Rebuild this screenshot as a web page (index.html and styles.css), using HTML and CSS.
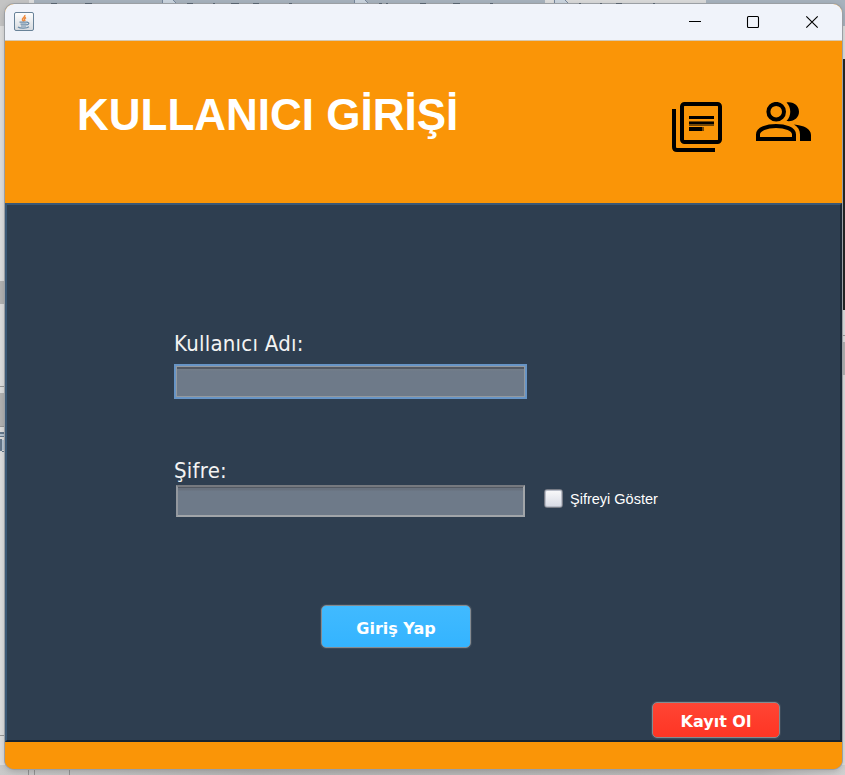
FILE: index.html
```html
<!DOCTYPE html>
<html lang="tr">
<head>
<meta charset="utf-8">
<title>Kullanıcı Girişi</title>
<link rel="stylesheet" href="styles.css">
</head>
<body>
<svg class="backdrop" width="845" height="775" viewBox="0 0 845 775" shape-rendering="crispEdges" aria-hidden="true">
  <defs><linearGradient id="floor"><stop offset="0" stop-color="#c9c9c9"/><stop offset=".3" stop-color="#b5b5b5"/><stop offset=".9" stop-color="#bababa"/><stop offset="1" stop-color="#d0d0d0"/></linearGradient></defs>
  <path fill="#dedede" d="M0 0h845v775H0z"/>
  <path fill="#c4c4c4" d="M0 0h29v26H0z"/>
  <path fill="#a7b2bd" d="M34 0h511v12H34zM706 0h139v26H706z"/>
  <path fill="#dadada" d="M553 0h153v12H553z"/>
  <g stroke="#77879c" fill="#cbd5df"><path d="M162.500-1v5h14l-4-5zM354.500-1v5h14l-4-5zM554.500-1v5h14l-4-5z"/></g>
  <path fill="#262626" d="M842 59h3v251h-3z"/>
  <path fill="#b2b2b2" d="M0 281h5v23H0zM0 393h5v33H0zM842 342h3v33h-3z"/>
  <path fill="#999" d="M0 386h5v1H0zM0 426h5v1H0zM842 335h3v1h-3zM0 735h5v1H0z"/>
  <path fill="#65788c" d="M0 432h5v2H0zM0 436h5v1H0zM0 439h2v12H0zM2 451h3v1H2z"/>
  <path fill="#b4c4d2" d="M0 434h5v2H0zM2 440h3v10H2z"/>
  <path fill="url(#floor)" d="M0 765h845v10H0z"/>
  <path fill="#929292" d="M28 769h1v6h-1zM34 769h1v6h-1zM69 769h1v6h-1z"/>
</svg>
<main class="window">
  <div class="titlebar">
    <svg class="java" width="20" height="20" viewBox="0 0 20 20">
      <defs><linearGradient id="tile" x2="0" y2="1"><stop stop-color="#fff"/><stop offset="1" stop-color="#d5d9de"/></linearGradient></defs>
      <rect x=".5" y=".5" width="19" height="18" rx="1.500" fill="url(#tile)" stroke="#688298"/>
      <path d="M10.800 3c1 2-3.300 3-2.300 5l1.300 1.500M12 5.500c-2 1.200-2 2-.8 3.500" fill="none" stroke="#ee8a3d" stroke-width="1.500"/>
      <path d="M5.500 10.200h8M6.500 12.200h6M7 14h5M13 10.500c3-.5 2 2.500-.7 2.300M4 15c2 1.700 9 1.500 11-.2" fill="none" stroke="#6c8ca8" stroke-width="1.200"/>
    </svg>
    <svg class="controls" width="132" height="20" viewBox="0 0 132 20" fill="none" stroke="#000">
      <path d="M1 9.500h12" shape-rendering="crispEdges"/>
      <rect x="59.500" y="4.500" width="11" height="11" rx="1" stroke-width="1.100"/>
      <path d="M118.300 4.300l11.400 11.400M129.700 4.300L118.300 15.700" stroke-width="1.150"/>
    </svg>
  </div>
  <header class="header">
    <h1>KULLANICI GİRİŞİ</h1>
    <svg class="docs" width="50" height="50" viewBox="0 0 50 50">
      <path d="M2 7v38q0 3 3 3h38" fill="none" stroke="#000" stroke-width="4"/>
      <rect x="10" y="2" width="38" height="38" rx="2.500" fill="none" stroke="#000" stroke-width="4"/>
      <path d="M17 14h25v3H17zM17 20h25v2H17zM17 25h13v4H17z"/>
      <path d="M17 19h25v1H17zM17 22h25v2H17zM30 25h2v4h-2z" fill="#704506"/>
    </svg>
    <svg class="people" width="56" height="40" viewBox="0 0 56 40">
      <circle cx="20.200" cy="9.700" r="7.800" fill="none" stroke="#000" stroke-width="4"/>
      <path d="M30.500.4C38 -.8 43 4 43 9.700S38 20 30.500 19c5-5 5-13.500 0-18.600z"/>
      <path d="M2 37V32.500C2 27 11 24 20 24s18 3 18 8.500V37z" fill="none" stroke="#000" stroke-width="4"/>
      <path d="M38 22.500c10 .8 17 4.500 17 10.500v6H44v-6.500c0-4.500-2-7.500-6-10z"/>
    </svg>
  </header>
  <section class="content">
    <label class="label name-label" for="user">Kullanıcı Adı:</label>
    <input class="field focused" id="user" type="text">
    <label class="label pass-label" for="pass"><span>Şifre:</span></label>
    <div class="pass-row">
      <input class="field" id="pass" type="password">
      <label class="show"><span class="box"></span><span class="show-text">Şifreyi Göster</span></label>
    </div>
    <button class="login"><span>Giriş Yap</span></button>
    <button class="register"><span>Kayıt Ol</span></button>
  </section>
  <footer class="footer"></footer>
</main>
<svg class="tabs" width="845" height="4" viewBox="0 0 845 4" shape-rendering="crispEdges" aria-hidden="true">
  <path fill="#59636e" d="M51 3h6v1h-6zM85 3h7v1h-7zM187 3h6v1h-6zM213 3h2v1h-2zM231 3h8v1h-8zM253 3h6v1h-6zM289 3h3v1h-3zM379 3h3v1h-3zM386 3h2v1h-2zM420 3h6v1h-6zM453 3h7v1h-7zM490 3h3v1h-3zM579 3h2v1h-2zM600 3h2v1h-2zM616 3h6v1h-6zM653 3h2v1h-2z"/>
</svg>
</body>
</html>
```
FILE: styles.css
```css
* { box-sizing: border-box; }
body { margin: 0; width: 845px; height: 775px; overflow: hidden; padding: 4px 3px 6px 5px; background: #dedede; }
.backdrop { position: absolute; left: 0; top: 0; z-index: -1; }
.tabs { position: absolute; left: 0; top: 0; }
.window { width: 837px; height: 765px; border-radius: 9px; overflow: hidden; box-shadow: 0 0 0 1px #9b9fa4, 0 2px 7px #0003; background: #fa9507; }
.titlebar { height: 37px; display: flex; justify-content: space-between; padding: 8px 22px 0 9px; background: #f0f3fa; border-bottom: 1px solid #d7c8ad; }
.header { height: 162px; display: flex; align-items: flex-start; background: #fa9507; padding-left: 72px; }
h1 { margin: 47px 0 0; width: 595px; font: bold 44px/54px "Liberation Sans", sans-serif; color: #fff; white-space: nowrap; }
.docs { margin-top: 61px; }
.people { margin: 61px 0 0 34px; }
.content { height: 539px; display: flex; flex-direction: column; align-items: flex-start; background: #2e3e50; border: 2px solid; border-color: #3b5875 #1d2936 #172431 #3b5875; padding-left: 167px; }
.label { font: 22px/28px "DejaVu Sans Condensed", "DejaVu Sans", sans-serif; letter-spacing: .25px; color: #f3f3f3; white-space: nowrap; }
.name-label { margin-top: 125px; }
.field { display: block; width: 349px; height: 32px; padding: 3px 6px; border: 2px solid; border-color: #76797f #a1a5a9 #a1a5a9 #92979e; border-radius: 0; background: linear-gradient(#535963 0 1px, #68717e 1px 3px, #6e7a89 4px); color: #fff; outline: 0; }
.focused { width: 353px; height: 35px; margin-top: 6px; border: 2px solid #6794c5; box-shadow: inset 0 0 0 1px #93999f; background: linear-gradient(#777b81 0 1px, #535963 1px 3px, #737d89 3px 4px, #6e7a89 5px); }
.pass-label { margin-top: 58px; }
.pass-row { display: flex; align-items: flex-start; margin: 0 0 0 2px; }
.show { display: flex; align-items: center; margin: 3px 0 0 19px; height: 20px; }
.box { width: 19px; height: 19px; border: 1px solid #787c86; border-radius: 3px; background: linear-gradient(#fafafb, #d7dae4); box-shadow: inset 0 0 0 1px #b9bdc8; }
.show-text { margin: 1px 0 0 7px; font: 14.500px/18px "Liberation Sans", sans-serif; color: #fff; white-space: nowrap; }
button { padding: 3px 0 0; border: 1px solid #858b91; border-radius: 5px; color: #fff; font: bold 16px/20px "DejaVu Sans", sans-serif; white-space: nowrap; box-shadow: 0 0 0 1px #3d4b5a; }
.login { width: 150px; height: 43px; margin: 88px 0 0 147px; padding-top: 4px; background: linear-gradient(#41baff, #34b4ff); }
.register { width: 128px; height: 36px; margin: 54px 0 0 478px; background: linear-gradient(#ff4534, #ff3524); }
.footer { height: 27px; background: #fa9507; }
```
